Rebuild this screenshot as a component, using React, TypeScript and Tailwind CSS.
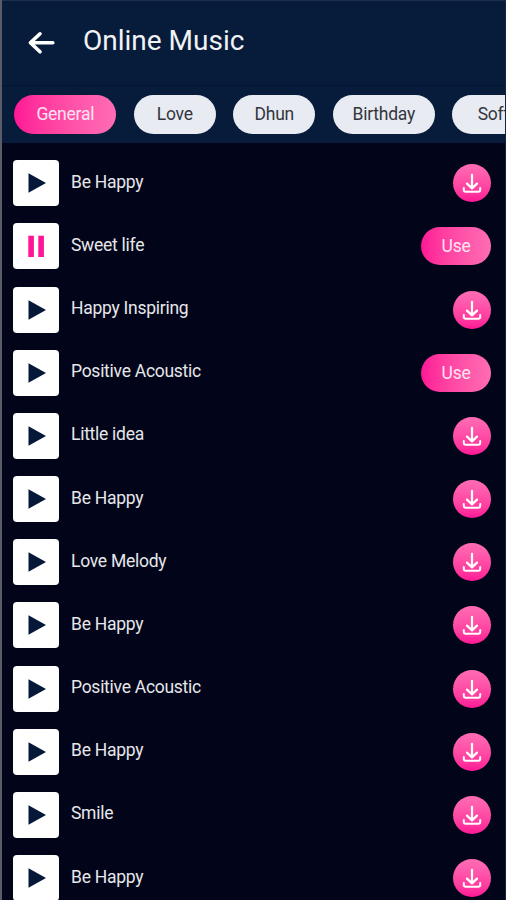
const categories = [
  { label: 'General', width: 'w-[102px]', active: true },
  { label: 'Love', width: 'w-[82px]' },
  { label: 'Dhun', width: 'w-[82px]' },
  { label: 'Birthday', width: 'w-[102px]' },
  { label: 'Soft', width: 'w-[82px]' },
]

const tracks = [
  { title: 'Be Happy' },
  { title: 'Sweet life', playing: true, downloaded: true },
  { title: 'Happy Inspiring' },
  { title: 'Positive Acoustic', downloaded: true },
  { title: 'Little idea' },
  { title: 'Be Happy' },
  { title: 'Love Melody' },
  { title: 'Be Happy' },
  { title: 'Positive Acoustic' },
  { title: 'Be Happy' },
  { title: 'Smile' },
  { title: 'Be Happy' },
]

function BackIcon() {
  return (
    <svg width="28" height="24" viewBox="0 0 28 24" fill="none" stroke="#fff" strokeWidth="3.6" strokeLinecap="round" strokeLinejoin="round">
      <path d="M25.8 11.8H3.4M13 2.8L3.4 11.8l9.6 9" />
    </svg>
  )
}

function PlayIcon() {
  return (
    <svg width="46" height="46" viewBox="0 0 46 46">
      <path d="M15.5 13.3L33 23L15.5 32.7Z" fill="#061838" />
    </svg>
  )
}

function PauseIcon() {
  return (
    <svg width="46" height="46" viewBox="0 0 46 46" fill="#ff1696">
      <rect x="15.3" y="12.7" width="5.6" height="21.3" />
      <rect x="25.3" y="12.7" width="5.6" height="21.3" />
    </svg>
  )
}

function DownloadIcon() {
  return (
    <svg width="38" height="38" viewBox="0 0 38 38" fill="none" stroke="#fff" strokeWidth="2" strokeLinecap="round" strokeLinejoin="round">
      <path d="M19 10.8v13M14 19.6l5 4.8 5-4.8" strokeWidth="2.2" />
      <path d="M10.8 24v1.8q0 2 2 2h12.4q2 0 2-2V24" />
    </svg>
  )
}

export default function App() {
  return (
    <div className="flex h-[900px] w-[506px] flex-col overflow-hidden border-r border-l-2 border-r-[#18243c] border-l-[#5a5d68] bg-[#020519] font-['Roboto',sans-serif]">
      <header className="flex h-[86px] shrink-0 items-center border-t border-b border-t-[#1c2f4c] border-b-[#03142e] bg-[#071c3b] pl-[25px]">
        <button aria-label="Back">
          <BackIcon />
        </button>
        <h1 className="mb-[5px] ml-[28px] text-[28px] leading-8 text-[#f1f2f5]">Online Music</h1>
      </header>

      <nav className="flex h-[57px] shrink-0 items-center gap-[17.5px] overflow-hidden bg-[#071c3b] pl-[12.3px]">
        {categories.map((c) => (
          <button
            key={c.label}
            className={`h-[39px] shrink-0 rounded-full text-[17.5px] tracking-[-0.25px] ${c.width} ${
              c.active ? 'bg-linear-to-r from-[#ff1496] to-[#ff6cb5] text-[#ffe3f2]' : 'bg-[#e8ebf2] text-[#33363d]'
            }`}
          >
            {c.label}
          </button>
        ))}
      </nav>

      <ul className="pt-[8.7px]">
        {tracks.map((track, i) => (
          <li key={i} className="flex h-[63.17px] items-center pr-[14px] pl-[11px]">
            <button aria-label={track.playing ? 'Pause' : 'Play'} className="size-[46px] rounded-[4px] bg-white">
              {track.playing ? <PauseIcon /> : <PlayIcon />}
            </button>
            <span className="mb-[2.6px] ml-3 flex-1 text-[17.5px] tracking-[-0.27px] text-[#e6e7eb]">{track.title}</span>
            {track.downloaded ? (
              <button className="h-[38px] w-[70px] rounded-full bg-linear-to-r from-[#ff1496] to-[#ff6cb5] text-[17.5px] tracking-[-0.25px] text-[#ffe3f2]">
                Use
              </button>
            ) : (
              <button aria-label="Download" className="size-[38px] rounded-full bg-linear-to-b from-[#ff6cb5] to-[#ff1496]">
                <DownloadIcon />
              </button>
            )}
          </li>
        ))}
      </ul>
    </div>
  )
}
